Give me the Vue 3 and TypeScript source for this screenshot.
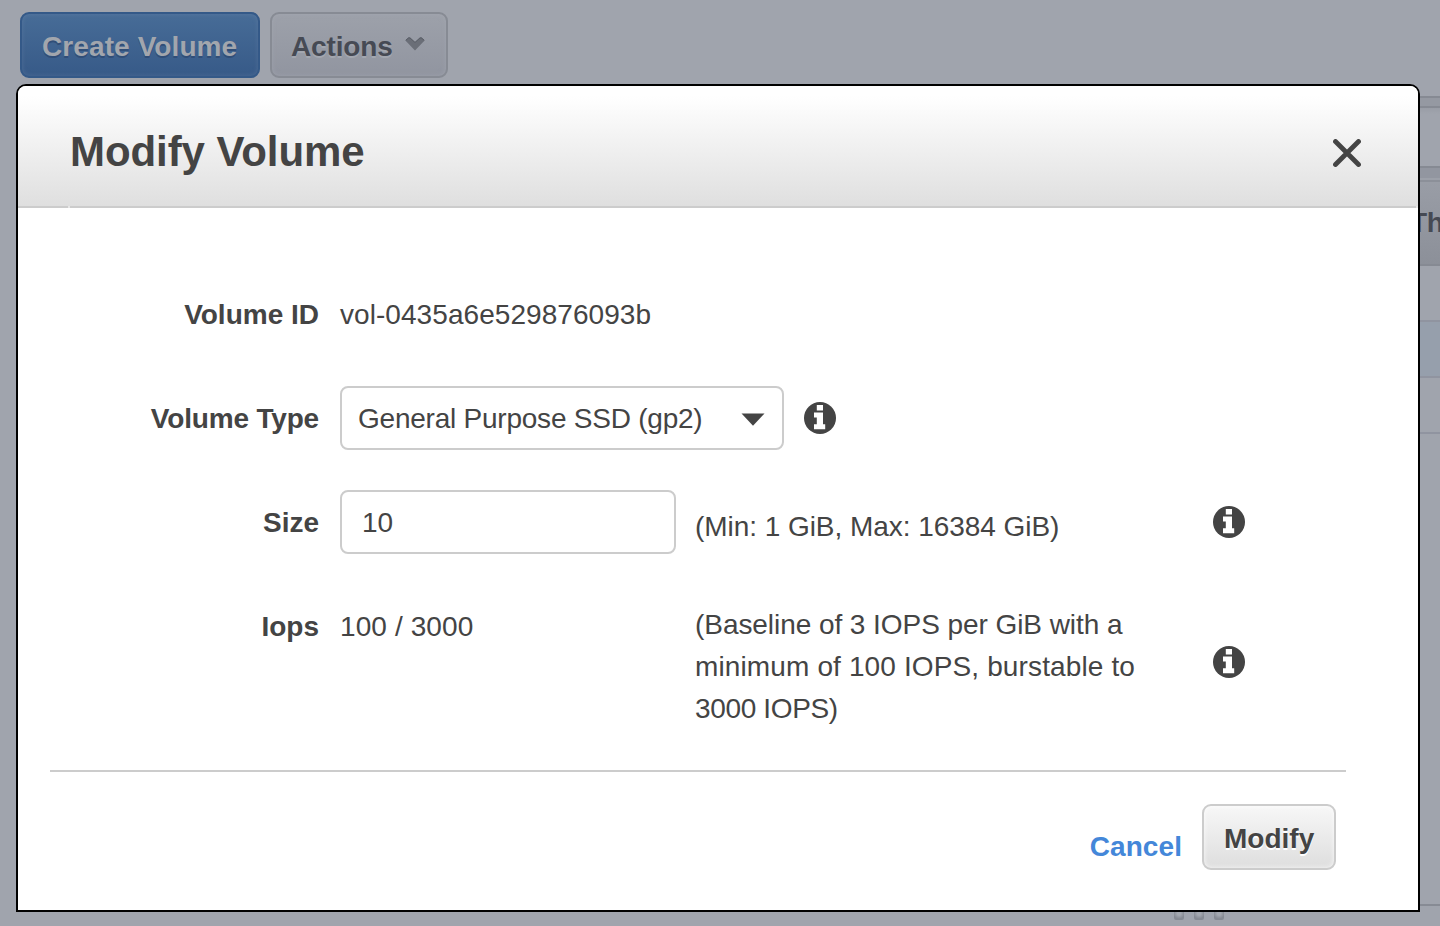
<script setup lang="ts">
import { ref } from 'vue'

const size = ref('10')
const rows = ['', 'selected', '']
const infoGlyph = 'M12.8 3H19V8.6H12.8ZM10 10.4H19V22.2H21.2V27.2H10V22.2H12.8V15.4H10Z'
</script>

<template>
  <div class="page">
    <div class="toolbar">
      <button class="btn primary"><span class="create-label">Create Volume</span></button>
      <button class="btn dim">
        <span class="actions-label">Actions</span>
        <svg class="chevron" width="20" height="14" viewBox="0 0 20 14">
          <path d="M0.4 3.4 3.4 0.6H5L10 5.2 15 0.6H16.6L19.6 3.4 10 13.4Z" fill="#6a6e77" />
          <path d="M0.8 3.2 3.6 0.9H5L10 5.4 15 0.9H16.4L19.2 3.2" fill="none" stroke="#585c65" stroke-width="1" />
        </svg>
      </button>
    </div>
    <div class="table">
      <div class="band top"></div>
      <div class="filter"></div>
      <div class="band"></div>
      <div class="thead"><span>Th</span></div>
      <div v-for="(row, i) in rows" :key="i" class="trow" :class="row"></div>
      <div class="rest"></div>
    </div>
    <div class="splitter"><i></i><i></i><i></i></div>

    <section class="modal">
      <header class="head">
        <h1>Modify Volume</h1>
        <svg class="close" width="28" height="28" viewBox="0 0 28 28">
          <path d="M2.5 2.5 25.5 25.5M25.5 2.5 2.5 25.5" stroke="#444" stroke-width="4.8" stroke-linecap="round" />
        </svg>
      </header>
      <div class="rule"><i></i><b></b></div>
      <div class="form">
        <div class="row">
          <label class="l-id">Volume ID</label>
          <span class="v-id">vol-0435a6e529876093b</span>
        </div>
        <div class="row">
          <label class="l-type">Volume Type</label>
          <div class="select">
            <span class="v-type">General Purpose SSD (gp2)</span>
            <svg width="24" height="13" viewBox="0 0 24 13"><path d="M0.5 0.5H23.5L12 12.7Z" fill="#444" /></svg>
          </div>
          <svg class="info first" width="32" height="32" viewBox="0 0 32 32">
            <circle cx="16" cy="16" r="16" fill="#444" />
            <path :d="infoGlyph" fill="#fff" />
          </svg>
        </div>
        <div class="row">
          <label class="l-size">Size</label>
          <input v-model="size" class="size" />
          <span class="hint v-min">(Min: 1 GiB, Max: 16384 GiB)</span>
          <svg class="info" width="32" height="32" viewBox="0 0 32 32">
            <circle cx="16" cy="16" r="16" fill="#444" />
            <path :d="infoGlyph" fill="#fff" />
          </svg>
        </div>
        <div class="row iops">
          <label class="l-iops">Iops</label>
          <span class="v-iops">100 / 3000</span>
          <p class="hint"><span class="b1">(Baseline of 3 IOPS per GiB with a</span><br /><span class="b2">minimum of 100 IOPS, burstable to</span><br /><span class="b3">3000 IOPS)</span></p>
          <svg class="info" width="32" height="32" viewBox="0 0 32 32">
            <circle cx="16" cy="16" r="16" fill="#444" />
            <path :d="infoGlyph" fill="#fff" />
          </svg>
        </div>
      </div>
      <footer class="foot">
        <a class="cancel">Cancel</a>
        <button class="btn modify"><span class="modify-label">Modify</span></button>
      </footer>
    </section>
  </div>
</template>

<style>
body {
  margin: 0;
  overflow: hidden;
}
</style>

<style scoped>
* {
  box-sizing: border-box;
}
.page {
  position: relative;
  width: 1440px;
  height: 926px;
  overflow: hidden;
  display: flex;
  flex-direction: column;
  background: #a0a4ad;
  color: #444;
  font: 28px/42px "Liberation Sans", Arial, sans-serif;
}
.toolbar {
  display: flex;
  gap: 10px;
  height: 96px;
  padding: 12px 20px 0;
  flex: none;
}
.btn {
  display: flex;
  align-items: center;
  height: 66px;
  margin: 0;
  padding: 4px 20px 0;
  border: 2px solid;
  border-radius: 9px;
  font: bold 28px/42px "Liberation Sans", Arial, sans-serif;
  white-space: nowrap;
}
.primary {
  width: 240px;
  color: #a2a6ad;
  border-color: #345988;
  background: linear-gradient(#476c97, #375a88);
  box-shadow: inset 0 0 5px rgba(130, 150, 180, 0.3);
  text-shadow: 0 2px 0 #304e78;
}
.create-label {
  letter-spacing: 0.1px;
}
.dim {
  width: 178px;
  padding-left: 19px;
  color: #464a54;
  border-color: #878b94;
  background: linear-gradient(#9da1aa, #9195a0);
  box-shadow: inset 0 0 5px rgba(165, 169, 178, 0.6);
  text-shadow: 0 2px 0 #a3a7b0;
}
.actions-label {
  letter-spacing: -0.15px;
}
.chevron {
  flex: none;
  margin: -7px 0 0 12px;
}
.table {
  flex: none;
  height: 810px;
  margin-left: 20px;
  display: flex;
  flex-direction: column;
  border-bottom: 2px solid #878b94;
}
.band {
  height: 14px;
  background: #9296a0;
  border-top: 2px solid #868a93;
  border-bottom: 2px solid #9ca0a9;
}
.band.top {
  height: 12px;
  border-bottom-color: #868a93;
  background: #9599a2;
}
.filter {
  height: 58px;
  background: linear-gradient(#999da6, #a0a4ad 6px);
}
.thead {
  height: 86px;
  padding: 20px 0 0 1390px;
  background: linear-gradient(#999da6, #8c9099);
  border-top: 2px solid #8c9099;
  border-bottom: 2px solid #868a93;
  color: #464a54;
  font-weight: bold;
}
.thead span {
  letter-spacing: -0.4px;
}
.trow {
  height: 56px;
  border-bottom: 2px solid #9094a0;
}
.selected {
  background: #969fac;
}
.splitter {
  display: flex;
  gap: 10px;
  padding: 4px 0 0 1174px;
}
.splitter i {
  width: 10px;
  height: 10px;
  border-radius: 2px;
  background: radial-gradient(circle at 50% 35%, #a4a8b0 20%, #868a93 65%);
}
.modal {
  position: absolute;
  left: 16px;
  top: 84px;
  width: 1404px;
  height: 828px;
  border: 2px solid #000;
  border-radius: 10px 10px 0 0;
  background: #fff;
  overflow: hidden;
}
.head {
  height: 120px;
  display: flex;
  align-items: center;
  justify-content: space-between;
  padding: 12px 57px 0 52px;
  background: linear-gradient(#fff 8%, #dfdfdf);
}
h1 {
  margin: 0;
  font-size: 42px;
  line-height: 50px;
  letter-spacing: -0.08px;
  white-space: nowrap;
}
.close {
  margin-top: 2px;
}
.rule {
  display: flex;
  gap: 2px;
  height: 2px;
  padding-right: 2px;
  background: #e6e6e6;
}
.rule i {
  width: 50px;
  background: #ccc;
}
.rule b {
  flex: 1;
  background: #ccc;
}
.form {
  height: 564px;
  margin: 0 72px 0 32px;
  padding-top: 74px;
  border-bottom: 2px solid #ccc;
}
.row {
  display: grid;
  grid-template-columns: 269px 336px 499px auto;
  column-gap: 20px;
  align-items: center;
  height: 64px;
  margin-bottom: 40px;
  white-space: nowrap;
}
.row > :nth-child(2) {
  margin-left: 1px;
}
label {
  padding-top: 2px;
  font-weight: bold;
  text-align: right;
}
.l-type {
  letter-spacing: -0.18px;
}
.v-id {
  padding-top: 2px;
  letter-spacing: 0.06px;
}
.v-iops {
  letter-spacing: 0.1px;
}
.v-type {
  padding-top: 2px;
  letter-spacing: -0.23px;
}
.v-min {
  letter-spacing: -0.05px;
}
.b1 {
  letter-spacing: -0.06px;
}
.b2 {
  letter-spacing: 0.13px;
}
.b3 {
  letter-spacing: -0.35px;
}
.select {
  width: 444px;
  height: 64px;
  padding: 0 17px 0 16px;
  display: flex;
  align-items: center;
  justify-content: space-between;
  border: 2px solid #ccc;
  border-radius: 8px;
}
.select svg {
  margin-top: 2px;
}
.size {
  width: 336px;
  height: 64px;
  margin: 0;
  padding: 2px 20px 0;
  border: 2px solid #ccc;
  border-radius: 8px;
  color: #444;
  background: #fff;
  font: 28px/42px "Liberation Sans", Arial, sans-serif;
  outline: none;
}
.hint {
  margin: 0;
}
.row .hint.v-min {
  padding-top: 10px;
}
.info {
  margin-left: -1px;
}
.row .info.first {
  margin-left: 109px;
}
.iops {
  height: 126px;
  align-items: start;
  margin-top: 50px;
}
.iops .info {
  margin-top: 42px;
}
.iops > label,
.iops > span {
  padding-top: 2px;
}
.foot {
  display: flex;
  justify-content: flex-end;
  gap: 20px;
  padding: 32px 82px 0 0;
}
.cancel {
  margin-top: 22px;
  color: #4487d9;
  font-weight: bold;
  letter-spacing: 0.08px;
}
.modify {
  width: 134px;
  color: #444;
  border-color: #ccc;
  background: linear-gradient(#f7f7f7, #dedede);
  box-shadow: inset 0 0 5px rgba(255, 255, 255, 0.8);
  text-shadow: 0 2px 0 #fff;
}
</style>
